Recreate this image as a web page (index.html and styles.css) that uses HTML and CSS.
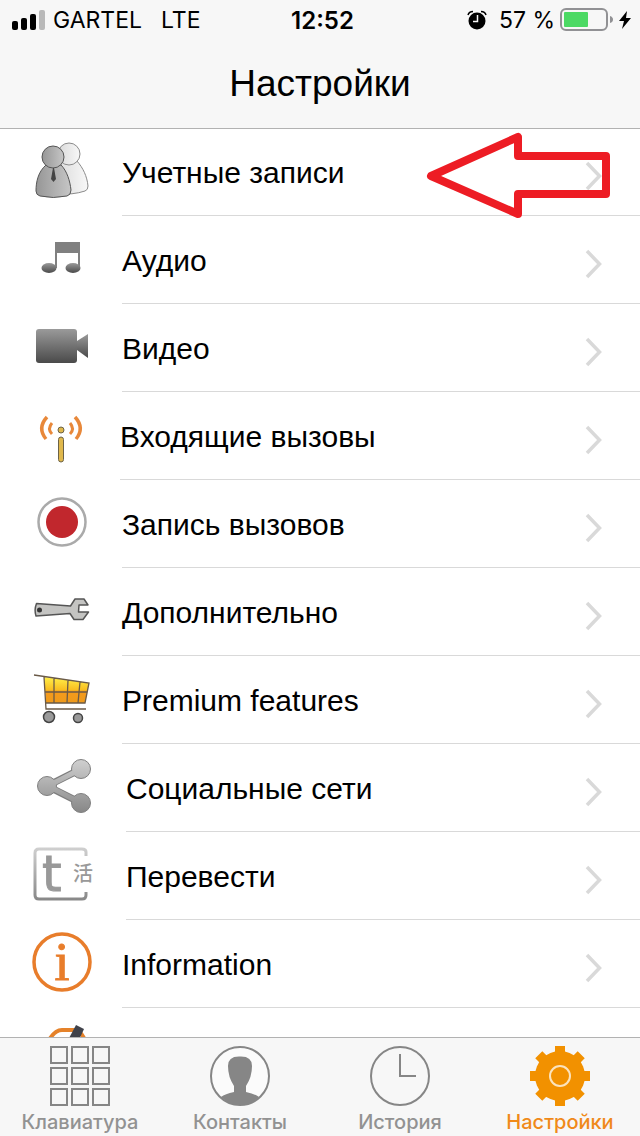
FILE: index.html
```html
<!DOCTYPE html>
<html lang="ru">
<head>
<meta charset="utf-8">
<meta name="viewport" content="width=device-width, initial-scale=1">
<title>Настройки</title>
<link rel="stylesheet" href="styles.css">
</head>
<body>
<svg class="defs" aria-hidden="true">
  <defs>
    <linearGradient id="gray" x1="0" y1="0" x2="0" y2="1"><stop offset="0" stop-color="#9a9a9a"/><stop offset="1" stop-color="#4a4a4a"/></linearGradient>
    <linearGradient id="soft" gradientUnits="userSpaceOnUse" x1="0" y1="14" x2="0" y2="70"><stop offset="0" stop-color="#d2d2d2"/><stop offset="1" stop-color="#858585"/></linearGradient>
    <linearGradient id="man" x1="0" y1="0" x2="1" y2="0"><stop offset="0" stop-color="#969696"/><stop offset="1" stop-color="#c6c6c6"/></linearGradient>
    <linearGradient id="ghost" x1="0" y1="0" x2="1" y2="0"><stop offset="0" stop-color="#dadada"/><stop offset="1" stop-color="#f8f8f8"/></linearGradient>
    <linearGradient id="gold" x1="0" y1="0" x2="0" y2="1"><stop offset="0" stop-color="#fff04a"/><stop offset="0.5" stop-color="#f9bd20"/><stop offset="0.55" stop-color="#f59a1c"/><stop offset="1" stop-color="#ee9a1b"/></linearGradient>
    <symbol id="chevron" viewBox="0 0 20 32"><path d="M3 3L15.500 16L3 29" fill="none" stroke="#d9d9d9" stroke-width="3.500"/></symbol>
  </defs>
</svg>

<header class="header">
  <div class="status">
    <div class="status-left">
      <svg class="signal" viewBox="0 0 34 22" aria-hidden="true">
        <rect x="0" y="12" width="6" height="9" rx="2"/><rect x="9" y="9" width="6" height="12" rx="2"/><rect x="18" y="5" width="6" height="16" rx="2"/><rect x="27" y="1" width="6" height="20" rx="2" fill="#b9b9b9"/>
      </svg>
      <span>GARTEL</span>
      <span class="network">LTE</span>
    </div>
    <time class="clock">12:52</time>
    <div class="status-right">
      <svg class="alarm" viewBox="0 0 20 20" aria-hidden="true">
        <circle cx="10" cy="11" r="8.500"/><path d="M1 5Q2 1.500 6 1.500M14 1.500Q18 1.500 19 5" fill="none" stroke="#000" stroke-width="1.500"/><path d="M10.500 5V11.500H6" fill="none" stroke="#f7f7f7" stroke-width="1.500"/>
      </svg>
      <span>57 %</span>
      <svg class="battery" viewBox="0 0 54 24" aria-hidden="true">
        <rect x="1" y="1" width="46" height="21" rx="5" fill="none" stroke="#919194" stroke-width="2"/><rect x="4" y="4" width="24" height="15" rx="1" fill="#4cd964"/><path d="M50 8Q53 9 53 11.500T50 15Z" fill="#919194"/>
      </svg>
      <svg class="bolt" viewBox="0 0 12 20" aria-hidden="true"><path d="M8 1L0 11H5L3 19L12 8H7Z"/></svg>
    </div>
  </div>
  <h1 class="title">Настройки</h1>
</header>

<main class="content">
  <ul class="list">
    <li class="row">
      <a class="row-link" href="#accounts">
        <svg class="icon" viewBox="0 0 96 88" aria-hidden="true">
          <g fill="url(#ghost)" stroke="#8b8b8b"><path d="M62 34C57 43 56 57 57 66Q73 67 85 63Q88 62 88 58C87 48 83 40 77 33Z"/><circle cx="69" cy="26" r="11"/></g>
          <g fill="url(#man)" stroke="#555"><path d="M46 37C38 44 36 54 36 63Q36 67 40 68Q53 71 67 68Q71 67 71 62C70 53 67 43 61 37Z"/><circle cx="53" cy="29" r="11"/></g>
          <path d="M53 40H54L56 51L53.500 54L51 51Z" fill="#444"/>
        </svg>
        <span class="label">Учетные записи</span>
        <svg class="chevron" aria-hidden="true"><use href="#chevron"/></svg>
      </a>
      <svg class="pointer" viewBox="0 0 184 88" aria-hidden="true"><path d="M5 48L92 9V28H180V66H92V86Z" fill="none" stroke="#ed1c24" stroke-width="8" stroke-linejoin="round"/></svg>
    </li>
    <li class="row">
      <a class="row-link" href="#audio">
        <svg class="icon" viewBox="0 0 96 88" aria-hidden="true">
          <path d="M55 26H80V52H78V37H57V52H55Z" fill="#808080"/><ellipse cx="49" cy="52" rx="7.500" ry="5" fill="url(#gray)"/><ellipse cx="73" cy="52" rx="7.500" ry="5" fill="url(#gray)"/>
        </svg>
        <span class="label">Аудио</span>
        <svg class="chevron" aria-hidden="true"><use href="#chevron"/></svg>
      </a>
    </li>
    <li class="row">
      <a class="row-link" href="#video">
        <svg class="icon" viewBox="0 0 96 88" aria-hidden="true">
          <rect x="36" y="25" width="41" height="34" rx="3" fill="url(#gray)"/><path d="M77 37L88 30V54L77 46Z" fill="url(#gray)"/>
        </svg>
        <span class="label">Видео</span>
        <svg class="chevron" aria-hidden="true"><use href="#chevron"/></svg>
      </a>
    </li>
    <li class="row row-near">
      <a class="row-link" href="#incoming">
        <svg class="icon" viewBox="0 0 96 88" aria-hidden="true">
          <g fill="none" stroke="#e8883a"><path d="M47 25Q37 36 46 47M75 25Q85 36 76 47" stroke-width="3.500"/><path d="M52 31Q47 37 52 42M70 31Q75 37 70 42" stroke-width="3"/></g>
          <g fill="#e0b84c" stroke="#6b6248"><circle cx="61" cy="38" r="3"/><rect x="58.500" y="45" width="5" height="25" rx="2.500"/></g>
        </svg>
        <span class="label">Входящие вызовы</span>
        <svg class="chevron" aria-hidden="true"><use href="#chevron"/></svg>
      </a>
    </li>
    <li class="row">
      <a class="row-link" href="#recording">
        <svg class="icon" viewBox="0 0 96 88" aria-hidden="true">
          <circle cx="62" cy="42" r="23.500" fill="#fff" stroke="#aaa" stroke-width="2.500"/><circle cx="62" cy="42" r="16" fill="#c1272d"/>
        </svg>
        <span class="label">Запись вызовов</span>
        <svg class="chevron" aria-hidden="true"><use href="#chevron"/></svg>
      </a>
    </li>
    <li class="row">
      <a class="row-link" href="#advanced">
        <svg class="icon" viewBox="0 0 96 88" aria-hidden="true">
          <path d="M36.500 35.500L70.500 38L75 31H84L88 37H79L78.500 44H88.500L83 51.500H74L70 45.500L36 48Q34 42 36.500 35.500Z" fill="#c4c4c2" stroke="#555" stroke-width="1.500" stroke-linejoin="round"/><circle cx="39.500" cy="42" r="2.500" fill="#333"/>
        </svg>
        <span class="label">Дополнительно</span>
        <svg class="chevron" aria-hidden="true"><use href="#chevron"/></svg>
      </a>
    </li>
    <li class="row">
      <a class="row-link" href="#premium">
        <svg class="icon" viewBox="0 0 96 88" aria-hidden="true">
          <path d="M44 21L89 27L85 47H46Z" fill="url(#gold)"/>
          <path d="M34 19L89 27L85 47H46M44 21L46 53H86M45 36H87M54 22V47M68 24L67 47M80 26L78 47" fill="none" stroke="#6a5a48" stroke-width="1.300"/>
          <g fill="#9a9a9a" stroke="#444" stroke-width="1.500"><circle cx="49" cy="61" r="5.500"/><circle cx="78" cy="62" r="4.500"/></g>
        </svg>
        <span class="label">Premium features</span>
        <svg class="chevron" aria-hidden="true"><use href="#chevron"/></svg>
      </a>
    </li>
    <li class="row row-far">
      <a class="row-link" href="#social">
        <svg class="icon" viewBox="0 0 96 88" aria-hidden="true">
          <path d="M81 25L47 42L81 59" fill="none" stroke="#7d7d7d" stroke-width="7"/>
          <g fill="url(#soft)" stroke="#808080"><circle cx="81" cy="25" r="9.500"/><circle cx="47" cy="42" r="9.500"/><circle cx="81" cy="59" r="9.500"/></g>
          <path d="M78 26.500L48 42L78 57.500" fill="none" stroke="url(#soft)" stroke-width="5"/>
        </svg>
        <span class="label">Социальные сети</span>
        <svg class="chevron" aria-hidden="true"><use href="#chevron"/></svg>
      </a>
    </li>
    <li class="row row-far">
      <a class="row-link" href="#translate">
        <svg class="icon" viewBox="0 0 96 88" aria-hidden="true">
          <path d="M86 24V20Q86 17 82 17H39Q35 17 35 21V63Q35 67 39 67H82Q86 67 86 63V60" fill="none" stroke="url(#soft)" stroke-width="3"/>
          <text class="glyph-t" x="42" y="59" fill="#999" stroke="#999">t</text><text class="glyph-cjk" x="73" y="49" fill="#999">活</text>
        </svg>
        <span class="label">Перевести</span>
        <svg class="chevron" aria-hidden="true"><use href="#chevron"/></svg>
      </a>
    </li>
    <li class="row">
      <a class="row-link" href="#information">
        <svg class="icon" viewBox="0 0 96 88" aria-hidden="true">
          <circle cx="62" cy="42" r="28" fill="none" stroke="#e87d2b" stroke-width="3.500"/><text class="glyph-i" x="62" y="60" text-anchor="middle" fill="#e87d2b" stroke="#e87d2b">i</text>
        </svg>
        <span class="label">Information</span>
        <svg class="chevron" aria-hidden="true"><use href="#chevron"/></svg>
      </a>
    </li>
    <li class="row">
      <a class="row-link" href="#more" aria-label="Ещё">
        <svg class="icon" viewBox="0 0 96 88" aria-hidden="true">
          <path d="M49 32Q55 22 62 22H76Q80 22 85 32" fill="none" stroke="#e5822a" stroke-width="4"/><path d="M76 17L84 21L78 34H67Z" fill="#40424a"/>
        </svg>
      </a>
    </li>
  </ul>
</main>

<nav class="tabs">
  <a class="tab" href="#keypad">
    <svg class="tab-icon" viewBox="0 0 60 60" aria-hidden="true"><g fill="none" stroke="#868686" stroke-width="2"><path d="M1 1H17V17H1ZM22 1H38V17H22ZM43 1H59V17H43ZM1 22H17V38H1ZM22 22H38V38H22ZM43 22H59V38H43ZM1 43H17V59H1ZM22 43H38V59H22ZM43 43H59V59H43Z"/></g></svg>
    <span>Клавиатура</span>
  </a>
  <a class="tab" href="#contacts">
    <svg class="tab-icon" viewBox="0 0 60 60" aria-hidden="true"><circle cx="30" cy="30" r="29" fill="#fbfbfb" stroke="#868686" stroke-width="2"/><path d="M11 51Q15 48 24 46V40Q18 31 18 20Q18 10 30 10.500Q42 10 42 20Q42 31 36 40V46Q45 48 49 51Q41 59 30 59T11 51Z" fill="#868686"/></svg>
    <span>Контакты</span>
  </a>
  <a class="tab" href="#history">
    <svg class="tab-icon" viewBox="0 0 60 60" aria-hidden="true"><circle cx="30" cy="30" r="29" fill="none" stroke="#868686" stroke-width="2"/><path d="M30 8V30H46" fill="none" stroke="#868686" stroke-width="2"/></svg>
    <span>История</span>
  </a>
  <a class="tab tab-active" href="#settings" aria-current="page">
    <svg class="tab-icon" viewBox="0 0 60 60" aria-hidden="true">
      <g fill="#f29100"><circle cx="30" cy="30" r="25"/><path d="M25 0H35V60H25ZM0 25H60V35H0Z"/><path d="M25 0H35V60H25ZM0 25H60V35H0Z" transform="rotate(45 30 30)"/></g><circle cx="30" cy="30" r="10" fill="none" stroke="#fbe3bd" stroke-width="2"/>
    </svg>
    <span>Настройки</span>
  </a>
</nav>
</body>
</html>
```

FILE: styles.css
```css
* {
  box-sizing: border-box;
}

body {
  display: flex;
  flex-direction: column;
  height: 100vh;
  margin: 0;
  background: #fff;
  color: #000;
  font-family: "Liberation Sans", Arial, sans-serif;
}

a {
  color: inherit;
  text-decoration: none;
}

svg {
  display: block;
  flex: none;
}

.defs {
  position: absolute;
  width: 0;
  height: 0;
}

.header {
  z-index: 1;
  flex: none;
  background: #f7f7f7;
  box-shadow: 0 1px #b2b2b2;
}

.status {
  display: grid;
  grid-template-columns: 1fr auto 1fr;
  align-items: center;
  height: 40px;
  padding: 0 9px 0 12px;
  font-family: Inter, sans-serif;
  font-size: 23px;
}

.status-left,
.status-right {
  display: flex;
  align-items: center;
}

.status-left {
  gap: 7px;
}

.status-right {
  justify-content: flex-end;
  gap: 5px;
}

.network {
  margin-left: 12px;
}

.clock {
  padding-left: 2px;
  font-size: 24px;
  font-weight: 600;
}

.signal {
  width: 34px;
  height: 22px;
}

.alarm {
  width: 20px;
  height: 20px;
  margin-right: 7px;
}

.battery {
  width: 54px;
  height: 24px;
}

.bolt {
  width: 12px;
  height: 20px;
}

.title {
  margin: 0;
  height: 88px;
  font-size: 37px;
  font-weight: 400;
  line-height: 88px;
  text-align: center;
}

.content {
  flex: 1;
  min-height: 0;
  overflow: hidden;
}

.list {
  margin: 0;
  padding: 0;
  list-style: none;
}

.row {
  --inset: 26px;
  position: relative;
}

.row-near {
  --inset: 24px;
}

.row-far {
  --inset: 30px;
}

.row-link {
  display: flex;
  align-items: center;
  height: 88px;
  padding-right: 36px;
}

.row-link::after {
  content: "";
  position: absolute;
  right: 0;
  bottom: 0;
  left: calc(96px + var(--inset));
  height: 1px;
  background: #d9d9d9;
}

.icon {
  width: 96px;
  height: 88px;
}

.label {
  flex: 1;
  padding: 2px 0 0 var(--inset);
  font-size: 30px;
  line-height: 36px;
}

.chevron {
  width: 20px;
  height: 32px;
  margin-top: 8px;
}

.pointer {
  position: absolute;
  top: 0;
  right: 30px;
  width: 184px;
  height: 88px;
  overflow: visible;
}

.glyph-t {
  font: 50px "DejaVu Sans", sans-serif;
}

.glyph-cjk {
  font: 500 20px "Noto Sans CJK SC", sans-serif;
}

.glyph-i {
  font: 54px "Liberation Serif", serif;
}

.tabs {
  display: grid;
  grid-template-columns: repeat(4, 1fr);
  flex: none;
  border-top: 1px solid #b2b2b2;
  background: #f7f7f7;
  z-index: 1;
}

.tab {
  display: flex;
  flex-direction: column;
  align-items: center;
  gap: 4px;
  padding: 8px 0 2px;
  color: #929292;
  font: 500 20px/24px Inter, sans-serif;
}

.tab-active {
  color: #f08a1a;
}

.tab-icon {
  width: 60px;
  height: 60px;
}
```
